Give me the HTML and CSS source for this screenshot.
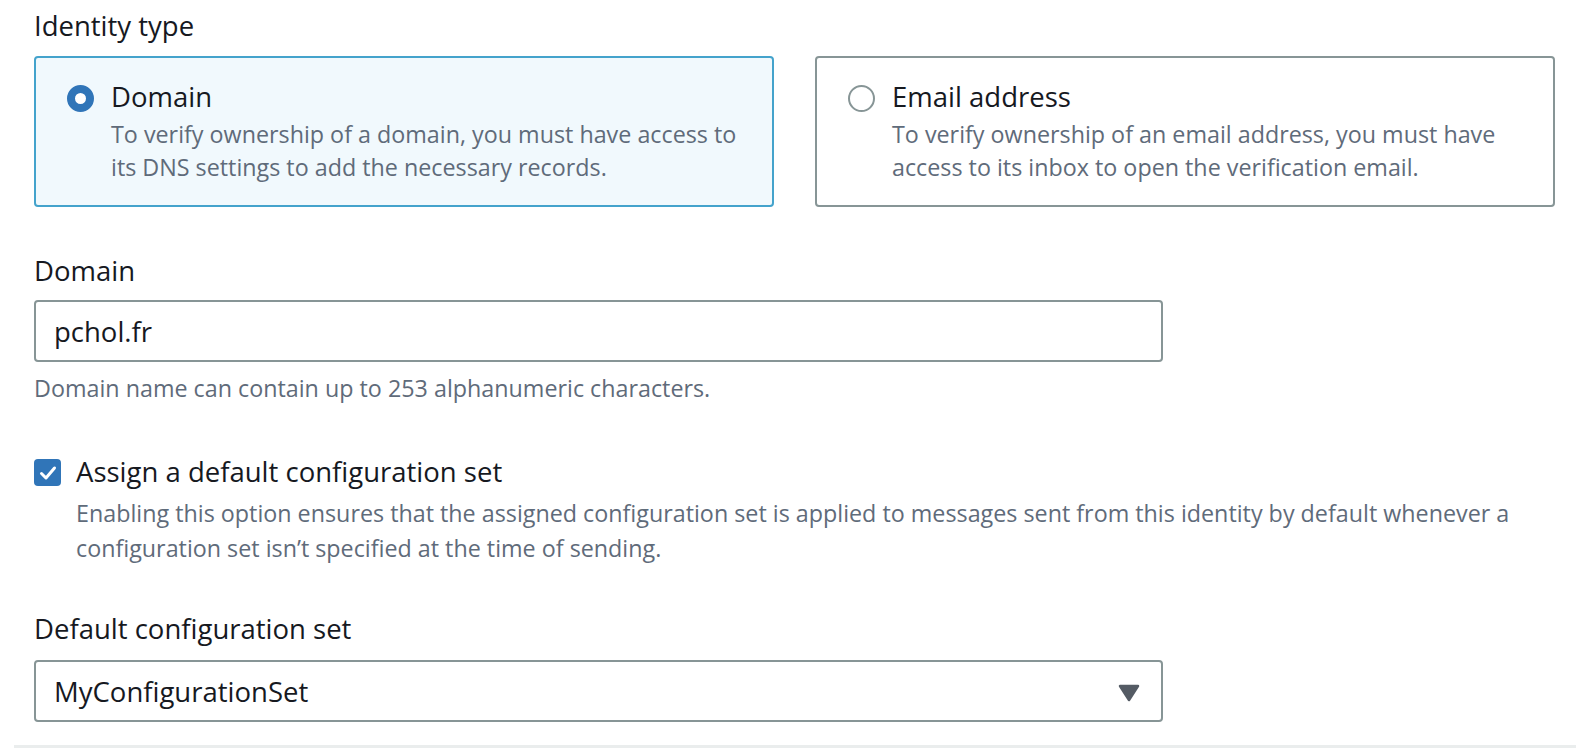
FILE: index.html
```html
<!DOCTYPE html>
<html>
<head>
<meta charset="utf-8">
<link rel="stylesheet" href="styles.css">
</head>
<body>
<div class="form">
  <div class="field">
    <div class="label">Identity type</div>
    <div class="tiles">
      <div class="tile selected">
        <span class="radio checked"></span>
        <div class="tile-text">
          <div class="tile-title">Domain</div>
          <div class="desc">To verify ownership of a domain, you must have access to its DNS settings to add the necessary records.</div>
        </div>
      </div>
      <div class="tile">
        <span class="radio"></span>
        <div class="tile-text">
          <div class="tile-title">Email address</div>
          <div class="desc">To verify ownership of an email address, you must have access to its inbox to open the verification email.</div>
        </div>
      </div>
    </div>
  </div>

  <div class="field domain-field">
    <div class="label">Domain</div>
    <div class="input">pchol.fr</div>
    <div class="help">Domain name can contain up to 253 alphanumeric characters.</div>
  </div>

  <div class="checkrow">
    <span class="checkbox">
      <svg width="18" height="16" viewBox="0 0 18 16"><path d="M2.5 8.5 L7 13 L15.5 3" fill="none" stroke="#fff" stroke-width="3" stroke-linecap="round" stroke-linejoin="round"/></svg>
    </span>
    <div class="check-text">
      <div class="check-title">Assign a default configuration set</div>
      <div class="desc">Enabling this option ensures that the assigned configuration set is applied to messages sent from this identity by default whenever a configuration set isn’t specified at the time of sending.</div>
    </div>
  </div>

  <div class="field select-field">
    <div class="label">Default configuration set</div>
    <div class="select">
      <span>MyConfigurationSet</span>
      <svg class="caret" width="22" height="18" viewBox="0 0 22 18"><path d="M2 2 L20 2 L11 16 Z" fill="#545b64" stroke="#545b64" stroke-width="2.5" stroke-linejoin="round"/></svg>
    </div>
  </div>
</div>
<div class="divider"></div>
</body>
</html>
```

FILE: styles.css
```css
html, body {
  margin: 0;
  padding: 0;
  background: #ffffff;
}
body {
  font-family: "Open Sans", "Noto Sans", sans-serif;
  font-size: 23px;
  color: #16191f;
  width: 1588px;
  height: 748px;
  overflow: hidden;
}
.form {
  padding: 10px 34px 0 34px;
  display: flex;
  flex-direction: column;
}
.label {
  font-size: 27.5px;
  line-height: 32px;
  color: #16191f;
}
.tiles {
  display: grid;
  grid-template-columns: 740px 740px;
  column-gap: 41px;
  margin-top: 14px;
}
.tile {
  border: 2px solid #879596;
  border-radius: 4px;
  padding: 23px 18px 20px 31px;
  display: flex;
  align-items: flex-start;
  gap: 17px;
  height: 151px;
  box-sizing: border-box;
}
.tile.selected {
  border-color: #44a3cc;
  background: #f1f9fd;
}
.radio {
  flex: none;
  width: 27px;
  height: 27px;
  border-radius: 50%;
  border: 2px solid #879596;
  box-sizing: border-box;
  margin-top: 4px;
  background: #fff;
}
.radio.checked {
  border: 8px solid #3075b8;
  background: #fff;
}
.tile-title, .check-title {
  font-size: 27.5px;
  line-height: 32px;
  color: #16191f;
}
.desc {
  font-size: 23.3px;
  line-height: 32.5px;
  color: #5f6b7a;
}
.tile-text .desc {
  margin-top: 5px;
}
.domain-field {
  margin-top: 48px;
}
.input {
  margin-top: 13px;
  width: 1129px;
  height: 62px;
  box-sizing: border-box;
  border: 2px solid #879596;
  border-radius: 4px;
  padding: 0 18px;
  display: flex;
  align-items: center;
  font-size: 27.5px;
}
.help {
  font-size: 23.3px;
  line-height: 33px;
  color: #5f6b7a;
  margin-top: 10px;
}
.checkrow {
  margin-top: 51px;
  display: flex;
  align-items: flex-start;
  gap: 15px;
}
.checkbox {
  flex: none;
  width: 27px;
  height: 27px;
  border-radius: 4px;
  background: #3075b8;
  margin-top: 3px;
  display: flex;
  align-items: center;
  justify-content: center;
}
.check-text .desc {
  margin-top: 8px;
  line-height: 34.5px;
}
.select-field {
  margin-top: 48px;
}
.select {
  margin-top: 15px;
  width: 1129px;
  height: 62px;
  box-sizing: border-box;
  border: 2px solid #879596;
  border-radius: 4px;
  padding: 0 21px 0 18px;
  display: flex;
  align-items: center;
  justify-content: space-between;
  font-size: 27.5px;
}
.caret {
  display: block;
  margin-top: 3px;
}
.divider {
  margin: 23px 12px 0 14px;
  height: 3px;
  background: #eaeded;
}
```
